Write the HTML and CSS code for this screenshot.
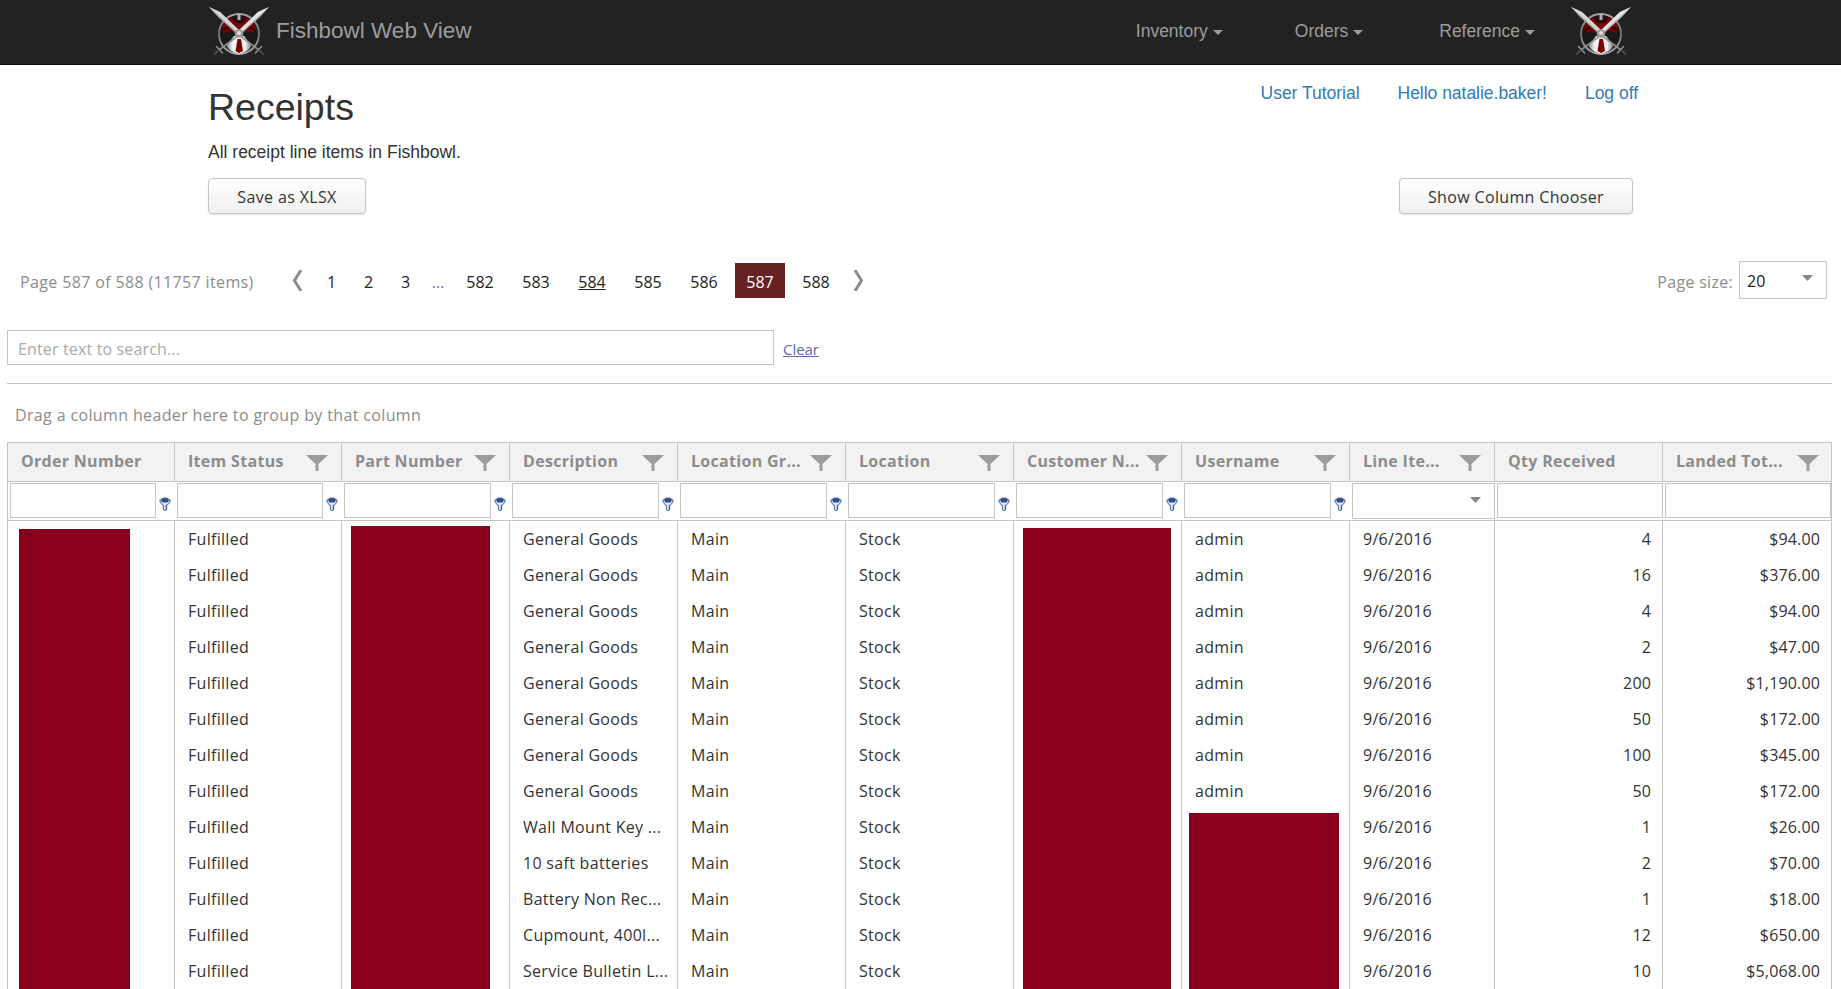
FILE: index.html
```html
<!DOCTYPE html>
<html lang="en">
<head>
<meta charset="utf-8">
<title>Receipts - Fishbowl Web View</title>
<link rel="stylesheet" href="styles.css">
</head>
<body>
<svg class="defs" width="0" height="0" aria-hidden="true">
  <defs>
    <linearGradient id="steel" x1="0" y1="0" x2="0" y2="1"><stop offset="0" stop-color="#a4a4a4"/><stop offset=".5" stop-color="#6d6d6d"/><stop offset="1" stop-color="#b5b5b5"/></linearGradient>
    <linearGradient id="skirt" x1="0" y1="0" x2="1" y2="0"><stop offset="0" stop-color="#8b8b8b"/><stop offset=".25" stop-color="#f4f4f4"/><stop offset=".75" stop-color="#eee"/><stop offset="1" stop-color="#777"/></linearGradient>
    <symbol id="logo" viewBox="0 0 62 52">
      <circle cx="31" cy="31" r="20" fill="#191919" stroke="url(#steel)" stroke-width="2"/>
      <path d="M14 25 Q17 15 26 13.500 L28 19 H34 L36 13.500 Q45 15 48 25 L46 30 L39 28 L34 31 H28 L23 28 L16 30 Z" fill="#760004"/>
      <path d="M24 14 L28 19 H34 L38 14 M15 27 L21 24 M47 27 L41 24" stroke="#240000" stroke-width="1.600" fill="none"/>
      <path d="M29.500 11 H32.500 V17 H29.500 Z" fill="#b0b0b0"/>
      <path d="M26 33 L18.500 43 Q23 50 31 50.500 Q39 50 43.500 43 L36 33 Z" fill="url(#skirt)"/>
      <path d="M29.500 36 H33 L35 48 L31 50 L27.500 48 Z" fill="#760004"/>
      <path d="M31 32 L11 47 M31 32 L51 47" stroke="#8d8d8d" stroke-width="1.600"/>
      <path d="M8 43 L15 50.500 M54 43 L47 50.500" stroke="#8f8f8f" stroke-width="1.500"/>
      <path d="M11 47 L6 51.500 M51 47 L56 51.500" stroke="#4c4c4c" stroke-width="1.800"/>
      <path d="M1 4 L12 9 L33 29 L30 32 L10 14 Z" fill="#a2a2a2"/>
      <path d="M1 4 L12 9 L33 29 L31 31 Z" fill="#d6d6d6"/>
      <path d="M61 4 L50 9 L29 29 L32 32 L52 14 Z" fill="#adadad"/>
      <path d="M61 4 L50 9 L29 29 L31 31 Z" fill="#e2e2e2"/>
      <circle cx="31" cy="30.500" r="4.300" fill="#979797"/><circle cx="31" cy="30" r="2" fill="#dedede"/>
    </symbol>
    <symbol id="funnel" viewBox="0 0 22 16"><path d="M0 0 H22 L12.500 9 V16 H9.500 V9 Z" fill="#9c9c9c"/></symbol>
    <symbol id="key" viewBox="0 0 12 14">
      <path d="M.8 3.500 Q6 -1.500 11.200 3.500 Q10.800 6.500 7.600 8.500 V12.500 Q6 14.500 4.400 12.500 V8.500 Q1.200 6.500 .8 3.500 Z" fill="#dfe8f3" stroke="#5b7aa8" stroke-width="1.200"/>
      <ellipse cx="6" cy="3.400" rx="3.600" ry="2.200" fill="#2e4d80"/>
      <path d="M7.200 8 V12.500" stroke="#3c5c8e" stroke-width="1"/>
    </symbol>
    <symbol id="arrow" viewBox="0 0 11 6"><path d="M0 0 H11 L5.500 6 Z" fill="#858585"/></symbol>
  </defs>
</svg>

<header class="navbar">
  <div class="container navbar-row">
    <a class="brand"><svg class="logo"><use href="#logo"/></svg><span class="brand-name">Fishbowl Web View</span></a>
    <nav class="menu">
      <a class="menu-item inventory">Inventory<i class="caret"></i></a>
      <a class="menu-item orders">Orders<i class="caret"></i></a>
      <a class="menu-item reference">Reference<i class="caret"></i></a>
      <svg class="logo"><use href="#logo"/></svg>
    </nav>
  </div>
</header>

<section class="container intro">
  <div class="intro-top">
    <div>
      <h1>Receipts</h1>
      <p class="lead">All receipt line items in Fishbowl.</p>
    </div>
    <div class="account"><a>User Tutorial</a><a>Hello natalie.baker!</a><a>Log off</a></div>
  </div>
  <div class="actions"><button class="btn save">Save as XLSX</button><button class="btn chooser">Show Column Chooser</button></div>
</section>

<main class="grid-view">
  <div class="pager">
    <span class="summary">Page 587 of 588 (11757 items)</span>
    <svg class="chev prev" viewBox="0 0 11 21"><path d="M9 0 L2.500 10.500 L9 21"/></svg>
    <div class="pages">
      <a class="short">1</a><a class="short">2</a><a class="short">3</a><span class="dots">…</span>
      <a>582</a><a>583</a><a class="hover">584</a><a>585</a><a>586</a><a class="current">587</a><a>588</a>
    </div>
    <svg class="chev" viewBox="0 0 11 21"><path d="M2 0 L8.500 10.500 L2 21"/></svg>
    <span class="size-label">Page size:</span>
    <div class="size-box"><span>20</span><svg class="arrow"><use href="#arrow"/></svg></div>
  </div>
  <div class="search"><div class="search-box">Enter text to search...</div><a class="clear">Clear</a></div>
  <div class="group-panel">Drag a column header here to group by that column</div>

  <div class="table">
    <div class="row head">
      <div><span>Order Number</span></div>
      <div><span>Item Status</span><svg class="funnel"><use href="#funnel"/></svg></div>
      <div><span>Part Number</span><svg class="funnel"><use href="#funnel"/></svg></div>
      <div><span>Description</span><svg class="funnel"><use href="#funnel"/></svg></div>
      <div><span>Location Gr...</span><svg class="funnel"><use href="#funnel"/></svg></div>
      <div><span>Location</span><svg class="funnel"><use href="#funnel"/></svg></div>
      <div><span>Customer N...</span><svg class="funnel"><use href="#funnel"/></svg></div>
      <div><span>Username</span><svg class="funnel"><use href="#funnel"/></svg></div>
      <div><span>Line Ite...</span><svg class="funnel"><use href="#funnel"/></svg></div>
      <div><span>Qty Received</span></div>
      <div><span>Landed Tot...</span><svg class="funnel"><use href="#funnel"/></svg></div>
    </div>
    <div class="row filters">
      <div><b class="field"></b><svg class="key"><use href="#key"/></svg></div>
      <div><b class="field"></b><svg class="key"><use href="#key"/></svg></div>
      <div><b class="field"></b><svg class="key"><use href="#key"/></svg></div>
      <div><b class="field"></b><svg class="key"><use href="#key"/></svg></div>
      <div><b class="field"></b><svg class="key"><use href="#key"/></svg></div>
      <div><b class="field"></b><svg class="key"><use href="#key"/></svg></div>
      <div><b class="field"></b><svg class="key"><use href="#key"/></svg></div>
      <div><b class="field"></b><svg class="key"><use href="#key"/></svg></div>
      <div class="wide"><b class="field date"><svg class="arrow"><use href="#arrow"/></svg></b></div>
      <div class="wide"><b class="field"></b></div>
      <div class="wide"><b class="field"></b></div>
    </div>
    <div class="body">
      <div class="row"><div></div><div>Fulfilled</div><div></div><div>General Goods</div><div>Main</div><div>Stock</div><div></div><div>admin</div><div>9/6/2016</div><div>4</div><div>$94.00</div></div>
      <div class="row"><div></div><div>Fulfilled</div><div></div><div>General Goods</div><div>Main</div><div>Stock</div><div></div><div>admin</div><div>9/6/2016</div><div>16</div><div>$376.00</div></div>
      <div class="row"><div></div><div>Fulfilled</div><div></div><div>General Goods</div><div>Main</div><div>Stock</div><div></div><div>admin</div><div>9/6/2016</div><div>4</div><div>$94.00</div></div>
      <div class="row"><div></div><div>Fulfilled</div><div></div><div>General Goods</div><div>Main</div><div>Stock</div><div></div><div>admin</div><div>9/6/2016</div><div>2</div><div>$47.00</div></div>
      <div class="row"><div></div><div>Fulfilled</div><div></div><div>General Goods</div><div>Main</div><div>Stock</div><div></div><div>admin</div><div>9/6/2016</div><div>200</div><div>$1,190.00</div></div>
      <div class="row"><div></div><div>Fulfilled</div><div></div><div>General Goods</div><div>Main</div><div>Stock</div><div></div><div>admin</div><div>9/6/2016</div><div>50</div><div>$172.00</div></div>
      <div class="row"><div></div><div>Fulfilled</div><div></div><div>General Goods</div><div>Main</div><div>Stock</div><div></div><div>admin</div><div>9/6/2016</div><div>100</div><div>$345.00</div></div>
      <div class="row"><div></div><div>Fulfilled</div><div></div><div>General Goods</div><div>Main</div><div>Stock</div><div></div><div>admin</div><div>9/6/2016</div><div>50</div><div>$172.00</div></div>
      <div class="row"><div></div><div>Fulfilled</div><div></div><div>Wall Mount Key ...</div><div>Main</div><div>Stock</div><div></div><div></div><div>9/6/2016</div><div>1</div><div>$26.00</div></div>
      <div class="row"><div></div><div>Fulfilled</div><div></div><div>10 saft batteries</div><div>Main</div><div>Stock</div><div></div><div></div><div>9/6/2016</div><div>2</div><div>$70.00</div></div>
      <div class="row"><div></div><div>Fulfilled</div><div></div><div>Battery Non Rec...</div><div>Main</div><div>Stock</div><div></div><div></div><div>9/6/2016</div><div>1</div><div>$18.00</div></div>
      <div class="row"><div></div><div>Fulfilled</div><div></div><div>Cupmount, 400l...</div><div>Main</div><div>Stock</div><div></div><div></div><div>9/6/2016</div><div>12</div><div>$650.00</div></div>
      <div class="row"><div></div><div>Fulfilled</div><div></div><div>Service Bulletin L...</div><div>Main</div><div>Stock</div><div></div><div></div><div>9/6/2016</div><div>10</div><div>$5,068.00</div></div>
      <i class="mask mask-order"></i><i class="mask mask-part"></i><i class="mask mask-customer"></i><i class="mask mask-user"></i>
    </div>
  </div>
</main>
</body>
</html>
```
FILE: styles.css
```css
* { box-sizing: border-box; }
html, body { height: 100%; overflow: hidden; }
body { margin: 0; background: #fff; color: #333; font: 17.5px/25px "Liberation Sans", Arial, sans-serif; white-space: nowrap; }
.defs { position: absolute; }
svg { display: block; flex: none; }
h1, p { margin: 0; }
.container { margin: 0 208px; }

/* top bar */
.navbar { height: 65px; background: #222; border-bottom: 1px solid #080808; color: #9d9d9d; }
.navbar-row { display: flex; justify-content: space-between; margin-right: 209px; }
.logo { width: 62px; height: 52px; margin-top: 3px; }
.brand { display: flex; }
.brand-name { margin-left: 6px; font-size: 22.5px; line-height: 61px; }
.menu { display: flex; line-height: 62px; }
.menu-item { display: flex; align-items: center; }
.caret { margin: 2px 0 0 5px; border: 5px solid transparent; border-top-color: #9d9d9d; border-bottom: 0; }
.inventory { margin-right: 72px; }
.orders { margin-right: 76px; }
.reference { margin-right: 35px; }

/* heading */
.intro { height: 197px; }
.intro-top { display: flex; justify-content: space-between; height: 113px; padding-top: 15px; }
h1 { font-size: 37.5px; line-height: 54px; font-weight: 400; }
.lead { margin-top: 6px; }
.account { display: flex; gap: 38px; margin: 1px -5px 0 0; color: #337ab7; }
.account a { letter-spacing: -.02px; }
.actions { display: flex; justify-content: space-between; }
.btn { height: 36px; padding: 2px 0 0; border: 1px solid #c5c5c5; border-radius: 4px; background: linear-gradient(#fff, #f0f0f0); box-shadow: 0 1px 2px rgba(0,0,0,.1); color: #333; font: 16px "Open Sans", sans-serif; letter-spacing: .35px; }
.save { width: 158px; }
.chooser { width: 234px; }

/* pager */
.grid-view { padding: 0 9px 0 7px; font: 16px/36px "Open Sans", "Noto Sans", sans-serif; letter-spacing: .3px; }
.pager { display: flex; align-items: flex-start; height: 68px; color: #8c8c8c; }
.summary { width: 285px; padding: 2px 0 0 13px; letter-spacing: .36px; }
.chev { width: 11px; height: 21px; margin-top: 8px; fill: none; stroke: #8c8c8c; stroke-width: 3; }
.pages { display: flex; height: 35px; margin: 1px 9px 0 10px; color: #222; line-height: 38px; letter-spacing: 0; }
.pages a { width: 50px; margin: 0 3px; text-align: center; }
.pages .short { width: 31px; }
.dots { width: 28px; text-align: center; color: #777; }
.pages .hover { text-decoration: underline; }
.pages .current { background: #622; color: #fff; }
.size-label { margin: 2px 6px 0 auto; }
.size-box { display: flex; justify-content: space-between; width: 88px; height: 38px; margin: -1px 5px 0 0; padding: 0 13px 0 7px; border: 1px solid #c5c5c5; color: #222; line-height: 38px; letter-spacing: 0; }
.arrow { width: 11px; height: 6px; margin-top: 13px; }

/* search */
.search { display: flex; height: 54px; border-bottom: 1px solid #c5c5c5; }
.search-box { width: 767px; height: 35px; padding: 0 10px; border: 1px solid #c5c5c5; color: #aaa; letter-spacing: .15px; }
.clear { margin: 1px 0 0 9px; color: #5b6ba6; font-size: 15px; text-decoration: underline; letter-spacing: -.05px; }
.group-panel { height: 58px; padding: 13px 8px 0; color: #8c8c8c; letter-spacing: .36px; }

/* table */
.table { width: 1825px; border: 1px solid #c5c5c5; border-bottom: 0; }
.row { display: grid; grid-template-columns: 167px 167px 168px 168px 168px 168px 168px 168px 145px 168px 168px; height: 36px; color: #333; }
.row > div { display: flex; padding: 0 12px 0 13px; border-right: 1px solid #c5c5c5; line-height: 36px; }
.row > div:last-child { border-right: 0; }
.body .row > div:nth-child(n+10) { justify-content: flex-end; padding-right: 11px; letter-spacing: .15px; }
.row.head { height: 39px; border-bottom: 1px solid #c5c5c5; background: #f2f2f2; color: #8c8c8c; font-weight: 700; }
.row.head > div { justify-content: space-between; }
.row.head > div:not(:last-child) { padding-right: 13px; }
.funnel { width: 22px; height: 16px; margin-top: 12px; }
.row.filters { height: 39px; border-bottom: 1px solid #c5c5c5; }
.row.filters > div { padding: 1px 3px 0 2px; border-right: 0; }
.row.filters > .wide { padding-right: 0; }
.field { flex: 1; height: 35px; border: 1px solid #c5c5c5; }
.date { display: flex; justify-content: flex-end; height: 36px; padding-right: 13px; }
.key { width: 12px; height: 14px; margin: 14px 1px 0 3px; }
.body { position: relative; height: 468px; }
.mask { position: absolute; bottom: 0; background: #88001b; }
.mask-order { left: 11px; top: 8px; width: 111px; }
.mask-part { left: 343px; top: 5px; width: 139px; }
.mask-customer { left: 1015px; top: 7px; width: 148px; }
.mask-user { left: 1181px; top: 292px; width: 150px; }
```
